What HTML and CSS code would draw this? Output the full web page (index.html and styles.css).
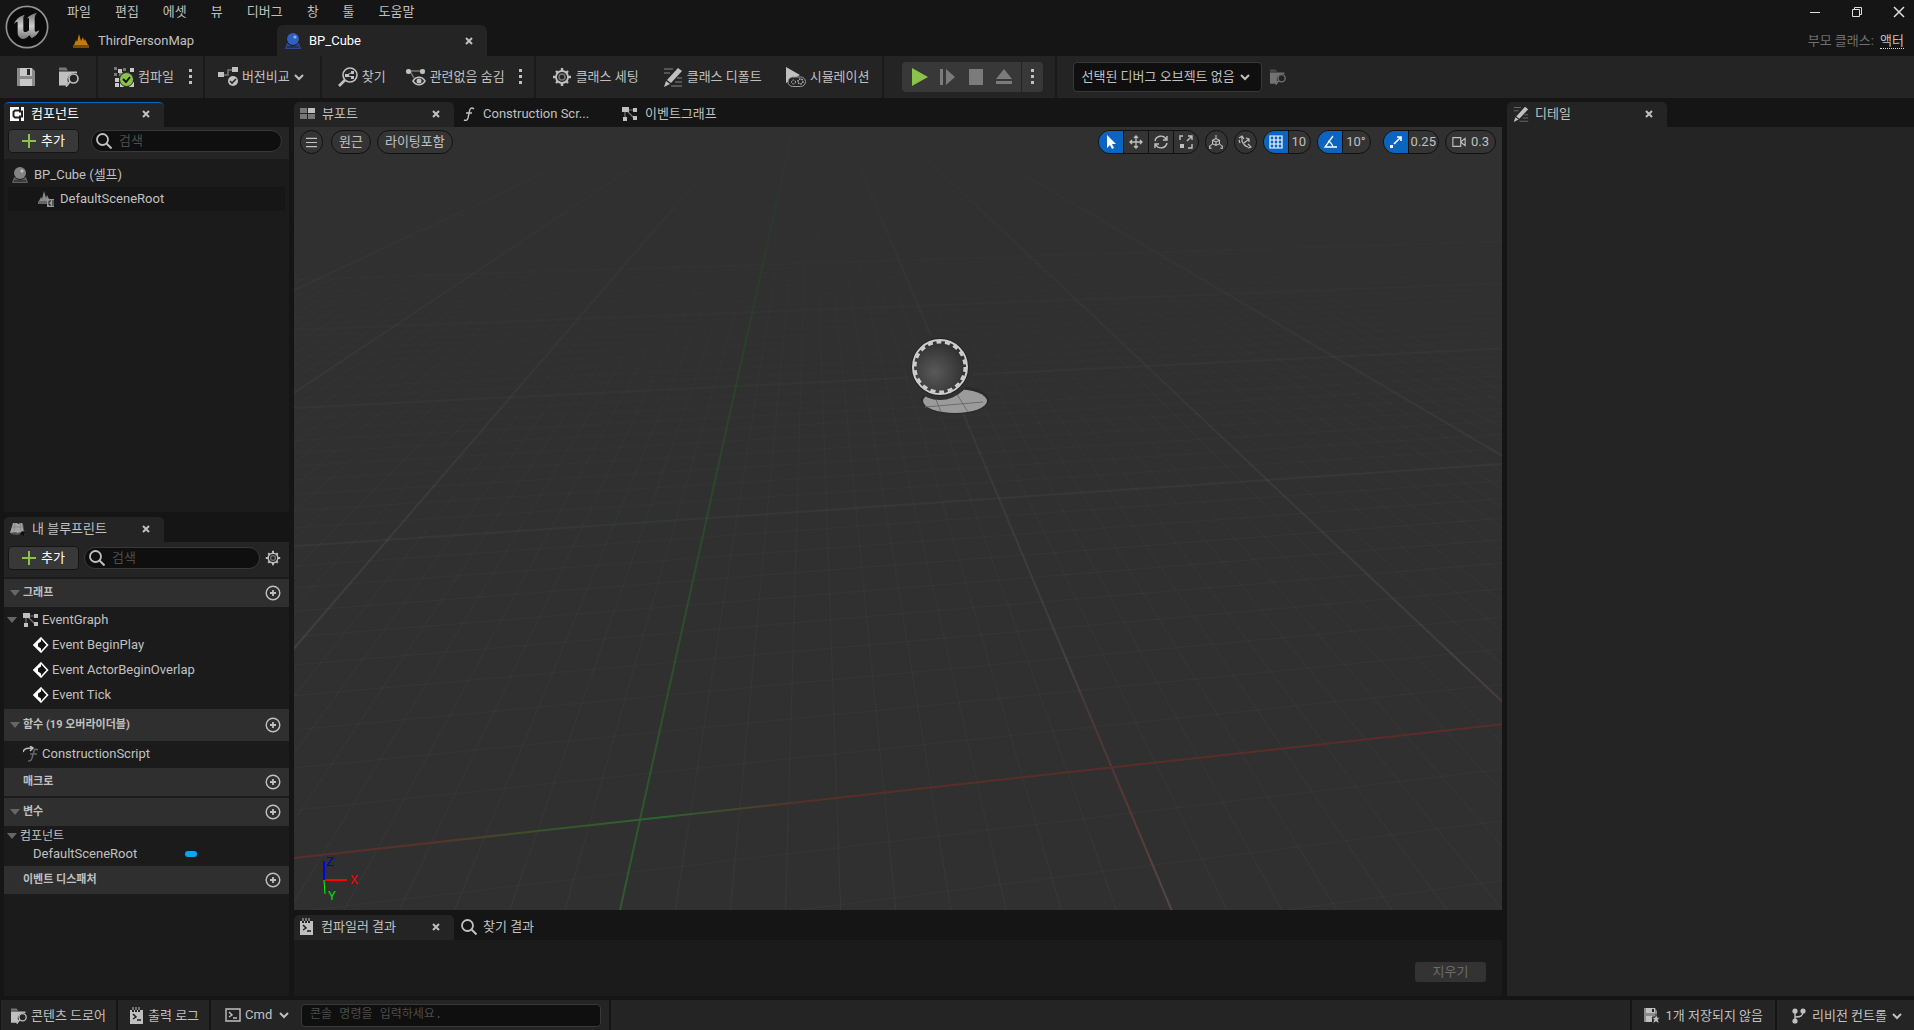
FILE: index.html
```html
<!DOCTYPE html>
<html lang="ko">
<head>
<meta charset="utf-8">
<title>BP_Cube</title>
<meta name="viewport" content="width=device-width, initial-scale=1">
<link rel="stylesheet" href="styles.css">
</head>
<body>
<svg class="sprite" aria-hidden="true">
  <symbol id="i-x" viewBox="0 0 8 8"><path d="M1 1l6 6M7 1L1 7" stroke="currentColor" stroke-width="2" fill="none"/></symbol>
  <symbol id="i-chev" viewBox="0 0 10 10"><path d="M1 3l4 4 4-4" stroke="currentColor" stroke-width="2" fill="none"/></symbol>
  <symbol id="i-dots" viewBox="0 0 4 16"><path d="M0 0h3v3H0zM0 6h3v3H0zM0 12h3v3H0z" fill="currentColor"/></symbol>
  <symbol id="i-level" viewBox="0 0 16 16"><path d="M0 12h16v3H0z" fill="#7a4a08"/><path d="M1 12L3 7l1 2L6 1l2 7 2-4 1 4 1-2 3 6z" fill="#c47c08"/></symbol>
  <symbol id="i-ball" viewBox="0 0 16 16"><path d="M2 10h12l2 6H0z" fill="currentColor" opacity=".65"/><path d="M2 14h12" stroke="#1b1b1b"/><circle cx="8" cy="6.500" r="6.500" fill="#1b1b1b"/><circle cx="8" cy="6" r="6" fill="currentColor"/><circle cx="10" cy="4" r="1.600" fill="#fff" opacity=".5"/></symbol>
  <symbol id="i-save" viewBox="0 0 18 18"><path d="M0 0h15l3 3v15H0z" fill="#8a8a8a"/><path d="M3 0h12v8H3zM3 11h12v7H3z" fill="#c8c8c8"/><path d="M10 1h3v6h-3z" fill="#242424"/></symbol>
  <symbol id="i-browse" viewBox="0 0 20 19"><path d="M0 0h7l2 3H0z" fill="#777"/><path d="M0 4h18v2a7 7 0 0 0-9 9l-2 3H0z" fill="currentColor"/><circle cx="14.500" cy="11" r="4.500" fill="#242424" stroke="currentColor" stroke-width="1.600"/><path d="M11 14l-4 5" stroke="currentColor" stroke-width="2"/></symbol>
  <symbol id="i-compile" viewBox="0 0 20 20"><path d="M5 5h4v4H5zM11 5h4v4h-4zM0 6h3v3H0z" fill="#777"/><path d="M0 0h3v3H0zM9 1h3v3H9z" fill="#777"/><path d="M4 2h4v4H4zM16 1h4v4h-4zM1 11h4v4H1zM1 16h4v4H1zM6 16h4v4H6zM15 15h5v5h-5z" fill="#c8c8c8"/><circle cx="12.500" cy="12.500" r="7" fill="#8bc34a" stroke="#242424"/><path d="M9 12l3 3 4-5" stroke="#151515" stroke-width="2" fill="none"/></symbol>
  <symbol id="i-diff" viewBox="0 0 20 20"><path d="M5 8h5V3h4" stroke="#777" fill="none" stroke-width="1.500"/><path d="M0 5h6v5H0zM14 0h6v5h-6z" fill="currentColor"/><circle cx="15" cy="14" r="5" fill="currentColor"/><path d="M12 14l2 2 4-4" stroke="#242424" stroke-width="1.600" fill="none"/></symbol>
  <symbol id="i-find" viewBox="0 0 20 20"><circle cx="12" cy="8" r="7" fill="none" stroke="currentColor" stroke-width="1.600"/><path d="M7 13l-6 6" stroke="currentColor" stroke-width="2.600"/><path d="M7 7h4v3H7zM13 4h3v3h-3zM13 9h3v3h-3z" fill="currentColor"/><path d="M9 8l4-2m-3 3l4 1" stroke="currentColor"/></symbol>
  <symbol id="i-hide" viewBox="0 0 20 20"><path d="M3 4h13M4 4l4 7" stroke="#777" stroke-width="1.500"/><rect y="2" width="5" height="5" rx="2" fill="currentColor"/><rect x="14" y="2" width="5" height="5" rx="2" fill="currentColor"/><path d="M7 14c3-5 9-5 12 0-3 5-9 5-12 0z" fill="#242424" stroke="currentColor" stroke-width="1.500"/><circle cx="13" cy="14" r="2.500" fill="currentColor"/></symbol>
  <symbol id="i-gear" viewBox="0 0 20 20"><circle cx="10" cy="10" r="6" fill="none" stroke="currentColor" stroke-width="1.800"/><circle cx="10" cy="10" r="3" fill="none" stroke="#777" stroke-width="1.500"/><path d="M10 1v3M10 16v3M1 10h3M16 10h3M4 4l2 2M14 14l2 2M16 4l-2 2M4 16l2-2" stroke="currentColor" stroke-width="2.400"/></symbol>
  <symbol id="i-pencil" viewBox="0 0 20 20"><path d="M1 2h9M1 6h6M14 11h5M12 15h7M8 19h11" stroke="#666" stroke-width="1.300"/><path d="M15 1l4 3L8 16l-4-3z" fill="currentColor"/><path d="M3 14l4 3-6 3z" fill="currentColor"/></symbol>
  <symbol id="i-sim" viewBox="0 0 20 20"><path d="M0 0l14 8L0 16z" fill="currentColor"/><rect x="2" y="10" width="17.500" height="9.500" rx="4.700" fill="#242424" stroke="#999"/><circle cx="7.500" cy="15" r="2" fill="none" stroke="currentColor" stroke-dasharray="1.500 1"/><circle cx="14.500" cy="14.500" r="2.500" fill="none" stroke="currentColor" stroke-width="1.400" stroke-dasharray="1.500 1"/></symbol>
  <symbol id="i-comp" viewBox="0 0 14 14"><path d="M0 0h14v14H0z" fill="currentColor"/><path d="M9 3.500H5L3.500 5v4L5 10.500h4M10 0v4M10 14v-4M9 4.500h3v5H9" stroke="#242424" stroke-width="2" fill="none"/></symbol>
  <symbol id="i-search" viewBox="0 0 16 16"><circle cx="6.500" cy="6.500" r="5.500" fill="none" stroke="currentColor" stroke-width="1.800"/><path d="M10.500 10.500l5 5" stroke="currentColor" stroke-width="2"/></symbol>
  <symbol id="i-plus" viewBox="0 0 14 14"><path d="M7 0v14M0 7h14" stroke="#8bc34a" stroke-width="2"/></symbol>
  <symbol id="i-root" viewBox="0 0 16 16"><path d="M0 10h9v3H0z" fill="#666"/><path d="M1 10l2-4 1 2 2-8 2 7 1-3 2 4v2z" fill="#8a8a8a"/><path d="M9 8h7v8H9z" fill="#999"/><path d="M13 10h-2v4h2M15 9v6" stroke="#161616" fill="none"/></symbol>
  <symbol id="i-viewport" viewBox="0 0 16 12"><path d="M0 0h7v5H0zM0 6h7v5H0zM8 6h7v5H8z" fill="#777"/><path d="M8 0h7v5H8z" fill="currentColor"/></symbol>
  <symbol id="i-func" viewBox="0 0 12 14"><path d="M11 2C9 0 7 1 6.500 4L5 11c-.5 2-2 3-4 2M3 6h6" stroke="currentColor" stroke-width="1.400" fill="none"/></symbol>
  <symbol id="i-graph" viewBox="0 0 16 14"><path d="M3 3h10M5 4l7 7M3 3v9" stroke="#777" stroke-width="1.200"/><path d="M0 0h7v5H0zM11 1h4v4h-4zM1 10h4v4H1zM11 9h4v4h-4z" fill="currentColor"/></symbol>
  <symbol id="i-book" viewBox="0 0 16 14"><path d="M1 12L4 1l4 1 5-1 2 12-4-1-4 1z" fill="#555"/><path d="M0 11L3 1h4l1 1 4-1 2 11-4-2-2 1-3-1z" fill="#a5a5a5"/><path d="M5 1L4 9M10 1l1 8M2 5h10" stroke="#888"/><path d="M12 9l3 1-1 4-4-2z" fill="#0c0c0c"/></symbol>
  <symbol id="i-add" viewBox="0 0 16 16"><circle cx="8" cy="8" r="6.800" fill="none" stroke="currentColor" stroke-width="1.400"/><path d="M8 5v6M5 8h6" stroke="currentColor" stroke-width="1.800"/></symbol>
  <symbol id="i-tri" viewBox="0 0 10 6"><path d="M0 0h10L5 6z" fill="#666"/></symbol>
  <symbol id="i-event" viewBox="0 0 16 16"><path d="M8 1l6.500 7L8 15 1 8z" fill="#111" stroke="#fff" stroke-width="1.600"/><path d="M8 1v3.500L5 6.500v3l3 2V15L1 8z" fill="#fff"/></symbol>
  <symbol id="i-override" viewBox="0 0 16 16"><path d="M0 6c1-4 5-4 9-4M7 0l3 2-3 3" stroke="#bbb" stroke-width="1.600" fill="none"/><path d="M15 4c-3-2-4 0-4.500 3L9 12c-1 3-2 3-4 3M7 8h7" stroke="#666" stroke-width="1.600" fill="none"/></symbol>
  <symbol id="i-log" viewBox="0 0 13 18"><path d="M0 3h2v2h2V3h1v2h2V3h1v2h2V3h3v14H0z" fill="currentColor"/><path d="M3 0v3M6 0v3M9 0v3" stroke="currentColor"/><path d="M3 7l3 3-3 2M7 13h4" stroke="#1b1b1b" stroke-width="1.500" fill="none"/></symbol>
  <symbol id="i-cmd" viewBox="0 0 16 14"><path d="M1 1h14v12H1z" fill="none" stroke="currentColor" stroke-width="1.400"/><path d="M4 4l3 3-3 2M8 10h4" stroke="currentColor" stroke-width="1.400" fill="none"/></symbol>
  <symbol id="i-unsaved" viewBox="0 0 16 16"><path d="M0 0h11l2 3v5l-5 1v5H0z" fill="#8a8a8a"/><path d="M2 0h9v5H2zM2 8h6v6H2z" fill="currentColor"/><path d="M8 1h2v3H8z" fill="#222"/><path d="M12 6l1.500 3.500H16l-2 2 1 4-3-2-3 2 1-4-2-2h3z" fill="currentColor" stroke="#242424" stroke-width=".6"/></symbol>
  <symbol id="i-branch" viewBox="0 0 14 16"><path d="M3 3v10M3 9c6 0 8-1 8-6" stroke="currentColor" stroke-width="1.400" fill="none"/><circle cx="3" cy="3" r="2.600" fill="currentColor"/><circle cx="11" cy="3" r="2.600" fill="currentColor"/><circle cx="3" cy="13" r="2.600" fill="currentColor"/></symbol>
</svg>

<header class="titlebar">
  <svg class="logo" viewBox="0 0 132 132" role="img" aria-label="Unreal"><defs><linearGradient id="metal" x1="0" y1="0" x2="0" y2="1"><stop offset="0" stop-color="#777"/><stop offset=".5" stop-color="#ccc"/><stop offset="1" stop-color="#777"/></linearGradient></defs><circle cx="66" cy="66" r="62" fill="#0b0b0b" stroke="#929292" stroke-width="5"/><path fill="url(#metal)" d="M27 58C32 42 46 32 60 29C54 34 55 38 55 44V76C55 84 66 82 72 76V44C72 38 70 38 66 42C70 34 78 28 96 24C90 30 89 36 89 42V74C89 82 94 82 103 76C97 90 88 96 80 100L73 91C66 100 58 102 54 102C44 100 38 92 38 84V54C38 48 32 50 27 58Z"/></svg>
  <div class="title-main">
    <div class="title-row">
      <nav class="menus" aria-label="메뉴"><button>파일</button><button>편집</button><button>에셋</button><button>뷰</button><button>디버그</button><button>창</button><button>툴</button><button>도움말</button></nav>
      <div class="window-buttons">
        <button aria-label="최소화"><svg viewBox="0 0 12 12"><path d="M1 6.500h10" stroke="#ddd"/></svg></button>
        <button aria-label="복원"><svg viewBox="0 0 12 12"><path d="M1.500 3.500h7v7h-7zM3.500 3V1.500h7v7H9" fill="none" stroke="#ddd"/></svg></button>
        <button aria-label="닫기"><svg viewBox="0 0 12 12"><path d="M1 1l10 10M11 1L1 11" stroke="#ddd" stroke-width="1.500"/></svg></button>
      </div>
    </div>
    <div class="title-row tabs-row">
      <button class="asset-tab"><svg class="i16"><use href="#i-level"/></svg>ThirdPersonMap</button>
      <div class="asset-tab current"><svg class="i16 blue"><use href="#i-ball"/></svg><span>BP_Cube</span><button class="close" aria-label="탭 닫기"><svg class="i8"><use href="#i-x"/></svg></button></div>
      <p class="parent">부모 클래스: <a href="#actor">액터</a></p>
    </div>
  </div>
</header>

<div class="toolbar">
  <div class="group first">
    <button aria-label="저장"><svg class="i18"><use href="#i-save"/></svg></button>
    <button aria-label="찾아보기"><svg class="i20"><use href="#i-browse"/></svg></button>
  </div>
  <div class="group compile">
    <button><svg class="i20"><use href="#i-compile"/></svg>컴파일</button>
    <button aria-label="컴파일 옵션"><svg class="dots"><use href="#i-dots"/></svg></button>
  </div>
  <div class="group diff">
    <button><svg class="i20"><use href="#i-diff"/></svg>버전비교<svg class="i10"><use href="#i-chev"/></svg></button>
  </div>
  <div class="group search-group">
    <button><svg class="i20"><use href="#i-find"/></svg>찾기</button>
    <button><svg class="i20"><use href="#i-hide"/></svg>관련없음 숨김</button>
    <button class="near" aria-label="숨김 옵션"><svg class="dots"><use href="#i-dots"/></svg></button>
  </div>
  <div class="group classes">
    <button><svg class="i20"><use href="#i-gear"/></svg>클래스 세팅</button>
    <button><svg class="i20"><use href="#i-pencil"/></svg>클래스 디폴트</button>
    <button><svg class="i20"><use href="#i-sim"/></svg>시뮬레이션</button>
  </div>
  <div class="group play">
    <div class="play-box">
      <button aria-label="플레이"><svg viewBox="0 0 18 18"><path d="M1 0l16 9L1 18z" fill="#8bc34a"/></svg></button>
      <button aria-label="프레임 건너뛰기"><svg viewBox="0 0 18 18"><path d="M1 1h3v16H1zM7 1l9 8-9 8z" fill="#7b7b7b"/></svg></button>
      <button aria-label="중지"><svg viewBox="0 0 18 18"><path d="M2 1h14v16H2z" fill="#7b7b7b"/></svg></button>
      <button aria-label="빼기"><svg viewBox="0 0 18 18"><path d="M9 1l8 10H1zM1 13h16v3H1z" fill="#7b7b7b"/></svg></button>
      <button class="play-more" aria-label="플레이 옵션"><svg class="dots"><use href="#i-dots"/></svg></button>
    </div>
  </div>
  <div class="group debug">
    <div class="select-box"><select aria-label="디버그 오브젝트"><option>선택된 디버그 오브젝트 없음</option></select><svg class="i10"><use href="#i-chev"/></svg></div>
    <button class="dim" aria-label="오브젝트 찾기"><svg class="i16"><use href="#i-browse"/></svg></button>
  </div>
</div>

<main class="workspace">
  <div class="left">
    <section class="panel components">
      <div class="tabs"><div class="tab active focus"><svg class="i14"><use href="#i-comp"/></svg><span>컴포넌트</span><button class="close" aria-label="닫기"><svg class="i8"><use href="#i-x"/></svg></button></div></div>
      <div class="panel-tools">
        <button class="add"><svg class="i14"><use href="#i-plus"/></svg>추가</button>
        <label class="search"><svg class="i16"><use href="#i-search"/></svg><input type="search" placeholder="검색" aria-label="컴포넌트 검색"></label>
      </div>
      <ul class="tree comp-tree">
        <li><svg class="i16 grey"><use href="#i-ball"/></svg>BP_Cube (셀프)</li>
        <li class="child"><svg class="i16"><use href="#i-root"/></svg>DefaultSceneRoot</li>
      </ul>
    </section>
    <section class="panel blueprint">
      <div class="tabs"><div class="tab active"><svg class="i16"><use href="#i-book"/></svg><span>내 블루프린트</span><button class="close" aria-label="닫기"><svg class="i8"><use href="#i-x"/></svg></button></div></div>
      <div class="panel-tools tall">
        <button class="add"><svg class="i14"><use href="#i-plus"/></svg>추가</button>
        <label class="search"><svg class="i16"><use href="#i-search"/></svg><input type="search" placeholder="검색" aria-label="블루프린트 검색"></label>
        <button aria-label="설정"><svg class="i16"><use href="#i-gear"/></svg></button>
      </div>
      <div class="sections">
        <h3><svg class="tri"><use href="#i-tri"/></svg>그래프<button aria-label="그래프 추가"><svg class="i16"><use href="#i-add"/></svg></button></h3>
        <ul class="tree">
          <li class="node"><svg class="tri"><use href="#i-tri"/></svg><svg class="i16"><use href="#i-graph"/></svg>EventGraph</li>
          <li class="event"><svg class="i16"><use href="#i-event"/></svg>Event BeginPlay</li>
          <li class="event"><svg class="i16"><use href="#i-event"/></svg>Event ActorBeginOverlap</li>
          <li class="event"><svg class="i16"><use href="#i-event"/></svg>Event Tick</li>
        </ul>
        <h3 class="functions"><svg class="tri"><use href="#i-tri"/></svg>함수 (19 오버라이더블)<button aria-label="함수 추가"><svg class="i16"><use href="#i-add"/></svg></button></h3>
        <ul class="tree"><li class="script"><svg class="i16"><use href="#i-override"/></svg>ConstructionScript</li></ul>
        <h3><span class="tri"></span>매크로<button aria-label="매크로 추가"><svg class="i16"><use href="#i-add"/></svg></button></h3>
        <h3 class="spaced"><svg class="tri"><use href="#i-tri"/></svg>변수<button aria-label="변수 추가"><svg class="i16"><use href="#i-add"/></svg></button></h3>
        <ul class="tree variables">
          <li class="node"><svg class="tri"><use href="#i-tri"/></svg>컴포넌트</li>
          <li class="variable"><span>DefaultSceneRoot</span><i class="pill"></i></li>
        </ul>
        <h3><span class="tri"></span>이벤트 디스패처<button aria-label="디스패처 추가"><svg class="i16"><use href="#i-add"/></svg></button></h3>
      </div>
    </section>
  </div>

  <div class="center">
    <section class="panel view-panel">
      <div class="tabs">
        <div class="tab active"><svg class="i16"><use href="#i-viewport"/></svg><span>뷰포트</span><button class="close" aria-label="닫기"><svg class="i8"><use href="#i-x"/></svg></button></div>
        <button class="tab"><svg class="i14"><use href="#i-func"/></svg>Construction Scr...</button>
        <button class="tab"><svg class="i16"><use href="#i-graph"/></svg>이벤트그래프</button>
      </div>
      <div class="viewport">
        <svg class="scene" viewBox="294 127 1208 783" preserveAspectRatio="xMidYMid slice" aria-hidden="true">
          <defs>
            <linearGradient id="minor-y" gradientUnits="userSpaceOnUse" x1="0" y1="150" x2="0" y2="910"><stop offset="0" stop-color="#fff" stop-opacity="0"/><stop offset=".3" stop-color="#fff" stop-opacity=".018"/><stop offset=".65" stop-color="#fff" stop-opacity=".028"/><stop offset=".85" stop-color="#f88" stop-opacity=".045"/><stop offset="1" stop-color="#fcc" stop-opacity=".045"/></linearGradient>
            <linearGradient id="major-y" gradientUnits="userSpaceOnUse" x1="0" y1="140" x2="0" y2="910"><stop offset="0" stop-color="#fff" stop-opacity=".005"/><stop offset=".3" stop-color="#fff" stop-opacity=".03"/><stop offset=".65" stop-color="#fff" stop-opacity=".07"/><stop offset=".73" stop-color="#a55" stop-opacity=".2"/><stop offset=".88" stop-color="#a44" stop-opacity=".34"/><stop offset="1" stop-color="#b88" stop-opacity=".25"/></linearGradient>
            <linearGradient id="green-y" gradientUnits="userSpaceOnUse" x1="0" y1="140" x2="0" y2="910"><stop offset="0" stop-color="#284028" stop-opacity=".2"/><stop offset=".4" stop-color="#2b442b"/><stop offset="1" stop-color="#2c5c2c"/></linearGradient>
            <linearGradient id="minor-x" gradientUnits="userSpaceOnUse" x1="294" y1="0" x2="1502" y2="0"><stop offset="0" stop-color="#ccc"/><stop offset=".3" stop-color="#7d7"/><stop offset=".5" stop-color="#ccc"/><stop offset="1" stop-color="#ccc"/></linearGradient>
            <linearGradient id="red-x" gradientUnits="userSpaceOnUse" x1="294" y1="0" x2="1502" y2="0"><stop offset="0" stop-color="#5c2c2c"/><stop offset=".12" stop-color="#553429"/><stop offset=".22" stop-color="#34562b"/><stop offset=".3" stop-color="#2c642e"/><stop offset=".42" stop-color="#562f2a"/><stop offset="1" stop-color="#5c2a2a"/></linearGradient>
            <radialGradient id="ball" cx=".4" cy=".6" r=".6"><stop offset="0" stop-color="#595959"/><stop offset="1" stop-color="#303030"/></radialGradient>
          </defs>
          <g id="grid" fill="none"></g>
          <ellipse cx="955" cy="400" rx="34" ry="14" fill="#292929"/>
          <ellipse cx="955" cy="401" rx="32" ry="12" fill="#9b9b9b"/>
          <path d="M935 397l6 15M955 391l13 21M925 407l58-5" stroke="#6d6d6d"/>
          <circle cx="940" cy="367" r="33" fill="#303030"/>
          <circle cx="940" cy="367" r="29" fill="#222"/>
          <circle cx="940" cy="367" r="26" fill="url(#ball)"/>
          <circle cx="940" cy="367" r="27" fill="none" stroke="#ccc" stroke-width="2"/>
          <circle cx="940" cy="367" r="25" fill="none" stroke="#ccc" stroke-width="3" stroke-dasharray="5 3.727"/>
          <g class="axis"><path d="M324 861v19" stroke="#00f" stroke-width="2"/><path d="M325 880h22" stroke="#f00" stroke-width="2"/><path d="M324 880l1 14" stroke="#0f0" stroke-width="1"/><text x="326" y="866" fill="#00c">Z</text><text x="350" y="884" fill="#f00">X</text><text x="328" y="900" fill="#0d0">Y</text></g>
        </svg>
        <div class="view-tools">
          <button class="round menu-button" aria-label="메뉴"><svg viewBox="0 0 12 12"><path d="M0 1.500h12M0 6h12M0 10.500h12" stroke="currentColor" stroke-width="1.200"/></svg></button>
          <button class="capsule">원근</button>
          <button class="capsule">라이팅포함</button>
          <div class="split push">
            <button class="on" aria-label="선택"><svg viewBox="0 0 14 14"><path d="M3 0l9 9H8l2 4-2 1-2-4-3 3z" fill="#fff"/></svg></button>
            <button aria-label="이동"><svg viewBox="0 0 14 14"><path d="M7 1v12M1 7h12M5 3l2-2 2 2M5 11l2 2 2-2M3 5L1 7l2 2M11 5l2 2-2 2" fill="none" stroke="currentColor" stroke-width="1.300"/></svg></button>
            <button aria-label="회전"><svg viewBox="0 0 14 14"><path d="M1 6a6 6 0 0 1 11-2M13 1v4H9M13 8a6 6 0 0 1-11 2M1 13V9h4" fill="none" stroke="currentColor" stroke-width="1.400"/></svg></button>
            <button aria-label="스케일"><svg viewBox="0 0 14 14"><path d="M1 5V1h3M9 1h4v4M13 1L8 6M13 9v4H9" fill="none" stroke="currentColor" stroke-width="1.400"/><path d="M1 9h4v4H1z" fill="currentColor"/></svg></button>
          </div>
          <button class="round" aria-label="좌표계"><svg viewBox="0 0 16 16"><path d="M8 0v5M4 6l4-2 4 2v4l-4 2-4-2zM4 6l4 2 4-2M8 8v4M4 10l-4 4M12 10l4 4M3 15h-3v-3M13 15h3v-3" fill="none" stroke="currentColor" stroke-width="1.200"/></svg></button>
          <button class="round" aria-label="표면 스냅"><svg viewBox="0 0 14 14"><path d="M1 3l3-2 2 3M4 1v5c1 3 3 5 6 6M6 8l5-4M8 3l3 1v3M10 9l3 3-3 1M1 5l1 3" fill="none" stroke="currentColor" stroke-width="1.200"/></svg></button>
          <div class="split"><button class="on" aria-label="그리드 스냅"><svg viewBox="0 0 14 14"><path d="M1 1h12v12H1zM5 1v12M9 1v12M1 5h12M1 9h12" fill="none" stroke="#fff" stroke-width="1.200"/></svg></button><button class="value">10</button></div>
          <div class="split"><button class="on" aria-label="회전 스냅"><svg viewBox="0 0 14 14"><path d="M10 1L2 12h12M5 6c3 1 4 3 5 6" fill="none" stroke="#fff" stroke-width="1.300"/></svg></button><button class="value">10°</button></div>
          <div class="split scale"><button class="on" aria-label="스케일 스냅"><svg viewBox="0 0 14 14"><path d="M5 9l7-7M8 2h4v4" fill="none" stroke="#fff" stroke-width="1.600"/><path d="M1 10h3v3H1z" fill="#fff"/></svg></button><button class="value">0.25</button></div>
          <button class="capsule camera"><svg viewBox="0 0 16 14"><path d="M1 2h9v10H1zM11 6l4-3v8l-4-3z" fill="none" stroke="currentColor" stroke-width="1.300"/></svg>0.3</button>
        </div>
      </div>
    </section>
    <section class="panel results">
      <div class="tabs">
        <div class="tab active"><svg class="log"><use href="#i-log"/></svg><span>컴파일러 결과</span><button class="close" aria-label="닫기"><svg class="i8"><use href="#i-x"/></svg></button></div>
        <button class="tab find-tab"><svg class="i16"><use href="#i-search"/></svg>찾기 결과</button>
      </div>
      <div class="results-body"><button class="clear" disabled>지우기</button></div>
    </section>
  </div>

  <section class="panel details">
    <div class="tabs"><div class="tab active"><svg class="i16"><use href="#i-pencil"/></svg><span>디테일</span><button class="close" aria-label="닫기"><svg class="i8"><use href="#i-x"/></svg></button></div></div>
    <div class="details-body"></div>
  </section>
</main>

<footer class="statusbar">
  <button class="cell"><svg class="i16"><use href="#i-browse"/></svg>콘텐츠 드로어</button>
  <button class="cell log-cell"><svg class="log"><use href="#i-log"/></svg>출력 로그</button>
  <div class="cell cmd-cell">
    <svg class="i16"><use href="#i-cmd"/></svg>
    <span class="cmd-select"><select aria-label="콘솔 종류"><option>Cmd</option></select><svg class="i10"><use href="#i-chev"/></svg></span>
    <input class="console" type="text" placeholder="콘솔 명령을 입력하세요." aria-label="콘솔 명령">
  </div>
  <div class="cell filler"></div>
  <button class="cell unsaved"><svg class="i16"><use href="#i-unsaved"/></svg>1개 저장되지 않음</button>
  <button class="cell revision"><svg class="i16"><use href="#i-branch"/></svg>리비전 컨트롤<svg class="i10"><use href="#i-chev"/></svg></button>
</footer>
<script src="grid.js"></script>
</body>
</html>
```
FILE: styles.css
```css
* { box-sizing: border-box; }
:root {
  --bg: #151515;
  --panel: #1b1b1b;
  --bar: #242424;
  --header: #2f2f2f;
  --text: #c0c0c0;
  --blue: #0a64c0;
}
body {
  margin: 0;
  min-height: 100vh;
  display: flex;
  flex-direction: column;
  background: var(--bg);
  color: var(--text);
  font: 13px/16px Roboto, "Noto Sans CJK KR", sans-serif;
}
button, input, select { font: inherit; color: inherit; margin: 0; }
button {
  display: inline-flex;
  align-items: center;
  padding: 0;
  border: 0;
  background: none;
  white-space: nowrap;
}
ul, h3, p { margin: 0; padding: 0; list-style: none; }
svg { display: block; flex: none; }
.sprite { position: absolute; width: 0; height: 0; }
.i8 { width: 8px; height: 8px; }
.i10 { width: 10px; height: 10px; }
.i14 { width: 14px; height: 14px; }
.i16 { width: 16px; height: 16px; }
.i18 { width: 18px; height: 18px; }
.i20 { width: 20px; height: 20px; }
.log { width: 13px; height: 18px; }
.dots { width: 4px; height: 16px; }
.tri { width: 10px; height: 6px; flex: none; }
.blue { color: #2f5fc4; }
.grey { color: #848484; }

/* Title bar */
.titlebar { display: flex; height: 56px; }
.logo { width: 44px; height: 44px; margin: 5px 0 0 5px; }
.title-main { flex: 1; padding-left: 18px; }
.title-row { display: flex; align-items: center; justify-content: space-between; height: 25px; padding-bottom: 1px; }
.menus { display: flex; gap: 24px; }
.window-buttons { display: flex; gap: 30px; padding-right: 9px; }
.window-buttons svg { width: 12px; height: 12px; }
.title-row.tabs-row { height: 31px; padding: 0; justify-content: flex-start; }
.asset-tab { display: flex; align-items: center; gap: 9px; width: 210px; height: 31px; padding-left: 6px; }
.asset-tab.current { padding: 0 14px 0 8px; gap: 8px; border-radius: 6px 6px 0 0; background: var(--bar); color: #fff; }
.close { margin-left: auto; color: #c0c0c0; }
.parent { margin-left: auto; padding-right: 10px; color: #6f6f6f; }
.parent a { margin-left: 3px; color: var(--text); text-decoration: none; border-bottom: 1px dotted #ddd; }

/* Main toolbar */
.toolbar { display: flex; height: 42px; background: var(--bar); }
.group { display: flex; align-items: center; gap: 20px; padding: 0 12px 0 16px; border-right: 2px solid #1a1a1a; }
.group button { gap: 4px; }
.group.first { gap: 24px; padding: 0 17px; }
.group.compile { gap: 15px; padding-right: 10px; }
.group.diff { padding: 0 16px 0 13px; }
.group.search-group { padding-right: 11px; }
.group .near { margin-left: -6px; }
.group.classes { gap: 24px; }
.group.play { padding: 0 12px 0 18px; }
.play-box { display: flex; align-items: center; height: 30px; padding-left: 9px; gap: 10px; border-radius: 4px; background: #383838; }
.play-box svg { width: 18px; height: 18px; }
.play-box .play-more { height: 30px; margin-left: -2px; padding: 0 8px 0 9px; border-left: 1px solid var(--bar); }
.play-box .dots { width: 4px; height: 16px; }
.group.debug { gap: 8px; border: 0; }
.select-box { display: flex; align-items: center; height: 30px; padding: 0 11px 0 8px; gap: 4px; border: 1px solid #383838; border-radius: 4px; background: #0f0f0f; }
select { appearance: none; padding: 0; border: 0; background: none; }
.dim { opacity: .5; }

/* Docked panels */
.workspace {
  flex: 1;
  display: grid;
  grid-template-columns: 285px minmax(0, 1fr) 407px;
  gap: 5px;
  padding: 4px 0 4px 4px;
}
.left { display: grid; grid-template-rows: 410fr 479fr; gap: 5px; }
.center { display: flex; flex-direction: column; gap: 5px; }
.panel { display: flex; flex-direction: column; min-width: 0; }
.tabs { display: flex; height: 25px; }
.tab { display: flex; align-items: center; gap: 7px; width: 160px; padding: 0 14px 2px 8px; border-radius: 5px 5px 0 0; }
.tab.active { padding-left: 6px; gap: 6px; background: var(--bar); }
.tab .log + span { margin-left: 2px; }
.tab.focus { gap: 7px; color: #fff; border-top: 1px solid var(--blue); padding-top: 0; }
.tab.find-tab { padding-left: 7px; gap: 6px; }
.panel-tools { display: flex; align-items: center; gap: 12px; min-height: 32px; padding: 0 7px 4px 4px; background: var(--bar); }
.panel-tools.tall { gap: 5px; padding-right: 8px; min-height: 35px; }
.add { justify-content: center; gap: 5px; width: 71px; height: 24px; border: 1px solid #151515; border-radius: 4px; background: #383838; color: #fff; }
.search { display: flex; flex: 1; align-items: center; gap: 7px; height: 22px; min-width: 0; padding: 0 4px; border: 1px solid #383838; border-radius: 11px; background: #0f0f0f; }
.search input { width: 100%; min-width: 0; padding: 0; border: 0; outline: 0; background: none; }
::placeholder { color: #4c4c4c; opacity: 1; }
.comp-tree { flex: 1; padding: 4px; background: var(--panel); }
.tree li { display: flex; align-items: center; gap: 6px; height: 24px; padding-left: 4px; }
.comp-tree .child { padding-left: 30px; background: #161616; }
.sections { flex: 1; padding-top: 2px; background: var(--panel); }
.sections h3 { display: flex; align-items: center; gap: 3px; height: 28px; padding: 0 8px 0 6px; background: var(--header); font-size: 11px; font-weight: 700; line-height: 16px; }
.sections h3 button { margin-left: auto; }
.sections h3.functions { height: 32px; margin-top: 2px; }
.sections h3.spaced { margin-top: 2px; }
.sections .tree li { height: 25px; gap: 3px; }
.sections .tree .node { padding-left: 3px; }
.node .i16 { margin-left: 3px; }
.sections .tree .event { padding-left: 29px; }
.sections .tree .script { height: 27px; padding: 0 0 2px 19px; }
.sections .variables { padding-bottom: 3px; }
.sections .variables li { height: 18px; }
.sections .variables .node { height: 19px; font-size: 12px; }
.sections .variables .variable { padding-left: 29px; gap: 48px; }
.pill { width: 12px; height: 6px; border-radius: 3px; background: #00a8f8; }

/* Viewport */
.view-panel { flex: 1; }
.viewport { position: relative; flex: 1; overflow: hidden; background: #303030; }
.scene { position: absolute; inset: 0; width: 100%; height: 100%; }
.axis text { font: 13px/16px Roboto, sans-serif; }
.view-tools { position: relative; display: flex; gap: 6px; padding: 3px 6px; }
.view-tools svg { width: 14px; height: 14px; }
.round, .capsule, .split { height: 24px; border: 1px solid #111; border-radius: 12px; background: #343434; }
.round { width: 23px; justify-content: center; }
.view-tools .menu-button svg { width: 11px; height: 11px; }
.round + .capsule { margin-left: 2px; }
.capsule { padding: 0 7px; gap: 5px; }
.capsule.camera { padding: 0 6px; }
.split { display: flex; overflow: hidden; }
.split button { width: 25px; justify-content: center; }
.split .value { width: auto; padding: 0 4px 0 3px; }
.split button + button { border-left: 1px solid #111; }
.split .on { width: 24px; background: var(--blue); }
.push { margin-left: auto; }
.split.scale { margin-left: 6px; }
.split.scale .value { padding: 0 2px; }

/* Results, details */
.results-body { display: flex; align-items: flex-end; justify-content: flex-end; height: 56px; padding: 14px 16px; background: var(--panel); }
.clear { width: 71px; height: 20px; justify-content: center; border-radius: 3px; background: #333; color: #6c6c6c; }
.details-body { flex: 1; background: var(--bar); }

/* Status bar */
.statusbar { display: flex; gap: 2px; height: 30px; padding-left: 1px; }
.cell { display: flex; align-items: center; gap: 4px; padding: 2px 10px 0; background: var(--bar); }
.log-cell { padding: 2px 10px 0 12px; gap: 5px; }
.cmd-cell { padding: 0 8px 0 14px; }
.cmd-select { display: flex; align-items: center; gap: 6px; }
.console { width: 300px; height: 23px; margin-left: 8px; padding: 0 8px; border: 1px solid #383838; border-radius: 4px; background: #0f0f0f; font: 12px/16px "Liberation Mono", "Noto Sans CJK KR", monospace; }
.filler { flex: 1; }
.unsaved { padding: 2px 12px 0; gap: 6px; }
.revision { padding: 2px 12px 0 14px; gap: 5px; }
```
FILE: grid.js
```js
// Draws the floor grid in perspective: two line families, ten minor cells per major cell.
const NS = 'http://www.w3.org/2000/svg';
const grid = document.getElementById('grid');
const horizon = 49;

function line(x1, y1, x2, y2, stroke, width, opacity) {
  const el = document.createElementNS(NS, 'line');
  const attrs = { x1, y1, x2, y2, stroke, 'stroke-width': width, 'stroke-opacity': opacity };
  for (const name in attrs) el.setAttribute(name, attrs[name]);
  grid.appendChild(el);
}

// Lines running away from the viewer, meeting at the near vanishing point.
for (let i = -32; i <= 36; i++) {
  const slope = -0.2212 + 0.06405 * i;
  const major = i % 10 === 0;
  const at = y => 810.5 + slope * (y - horizon);
  const stroke = i === 0 ? 'url(#green-y)' : major ? 'url(#major-y)' : 'url(#minor-y)';
  line(at(127), 127, at(910), 910, stroke, major ? 2 : 1, 1);
}

// Lines running across, meeting at the far vanishing point on the right.
for (let i = -8; i <= 60; i++) {
  const depth = 1 / (0.001236 + 0.0000775 * i);
  const right = depth * (7594 - 1502) / (7594 - 294);
  const major = i % 10 === 0;
  const fade = Math.max(0, Math.min(1, (depth - 150) / 400));
  if (i === 0) line(294, horizon + depth, 1502, horizon + right, 'url(#red-x)', 2, 1);
  else line(294, horizon + depth, 1502, horizon + right, 'url(#minor-x)', major ? 2 : 1, (major ? 0.05 : 0.03) * fade);
}
```
